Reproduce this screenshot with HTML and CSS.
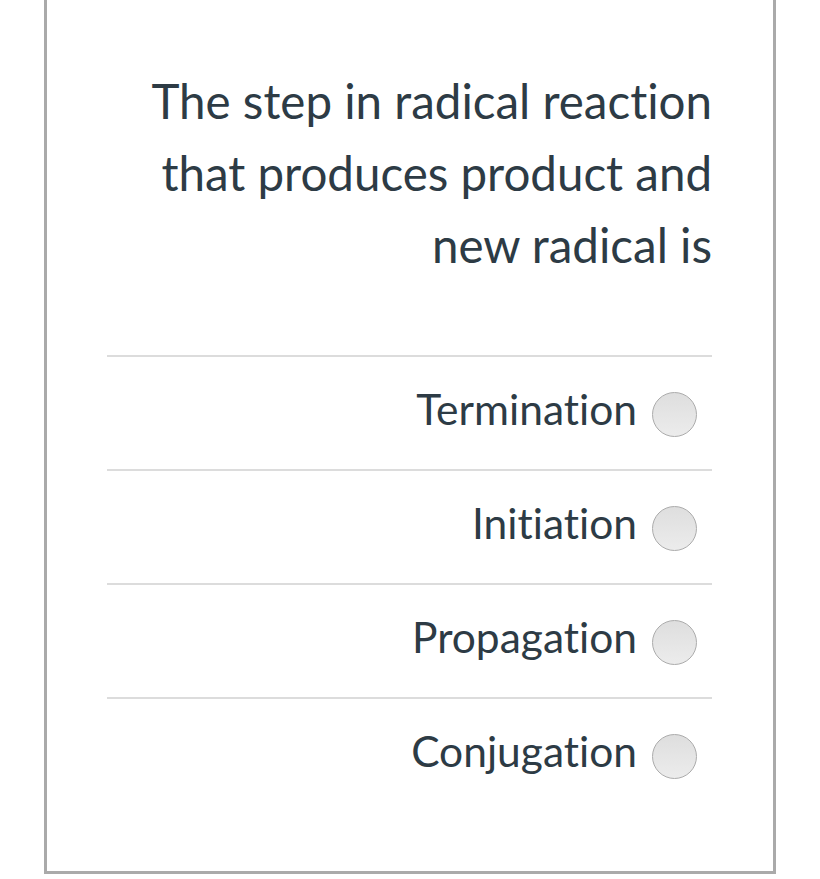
FILE: index.html
```html
<!DOCTYPE html>
<html>
<head>
<meta charset="utf-8">
<link rel="stylesheet" href="styles.css">
</head>
<body>
<div class="card">
  <div class="question">The step in radical reaction that produces product and new radical is</div>
  <div class="options">
    <label class="option"><span class="label">Termination</span><span class="radio"></span></label>
    <label class="option"><span class="label">Initiation</span><span class="radio"></span></label>
    <label class="option"><span class="label">Propagation</span><span class="radio"></span></label>
    <label class="option"><span class="label">Conjugation</span><span class="radio"></span></label>
  </div>
</div>
</body>
</html>
```
FILE: styles.css
```css
html, body {
  margin: 0;
  padding: 0;
  background: #fff;
}
body {
  font-family: Lato, "Open Sans", sans-serif;
  color: #2d3b45;
  font-variant-ligatures: none;
}
.card {
  margin-left: 44px;
  width: 605px;
  height: 871px;
  border: 3px solid #aaaaaa;
  border-top: none;
  padding: 0 61px 0 60px;
  box-sizing: content-box;
}
.question {
  padding-top: 65px;
  font-size: 47.5px;
  line-height: 72px;
  text-align: right;
  padding-left: 30px;
  padding-bottom: 74px;
}
.options {
  display: flex;
  flex-direction: column;
}
.option {
  display: flex;
  justify-content: flex-end;
  align-items: center;
  height: 112px;
  border-top: 2px solid #dcdcdc;
  gap: 15px;
  padding-right: 15px;
}
.label {
  font-size: 42.5px;
  margin-bottom: 10px;
}
.radio {
  width: 43px;
  height: 43px;
  border-radius: 50%;
  border: 1.5px solid #ababab;
  background: linear-gradient(#dedede, #ececec);
  margin-top: 2px;
}
```
